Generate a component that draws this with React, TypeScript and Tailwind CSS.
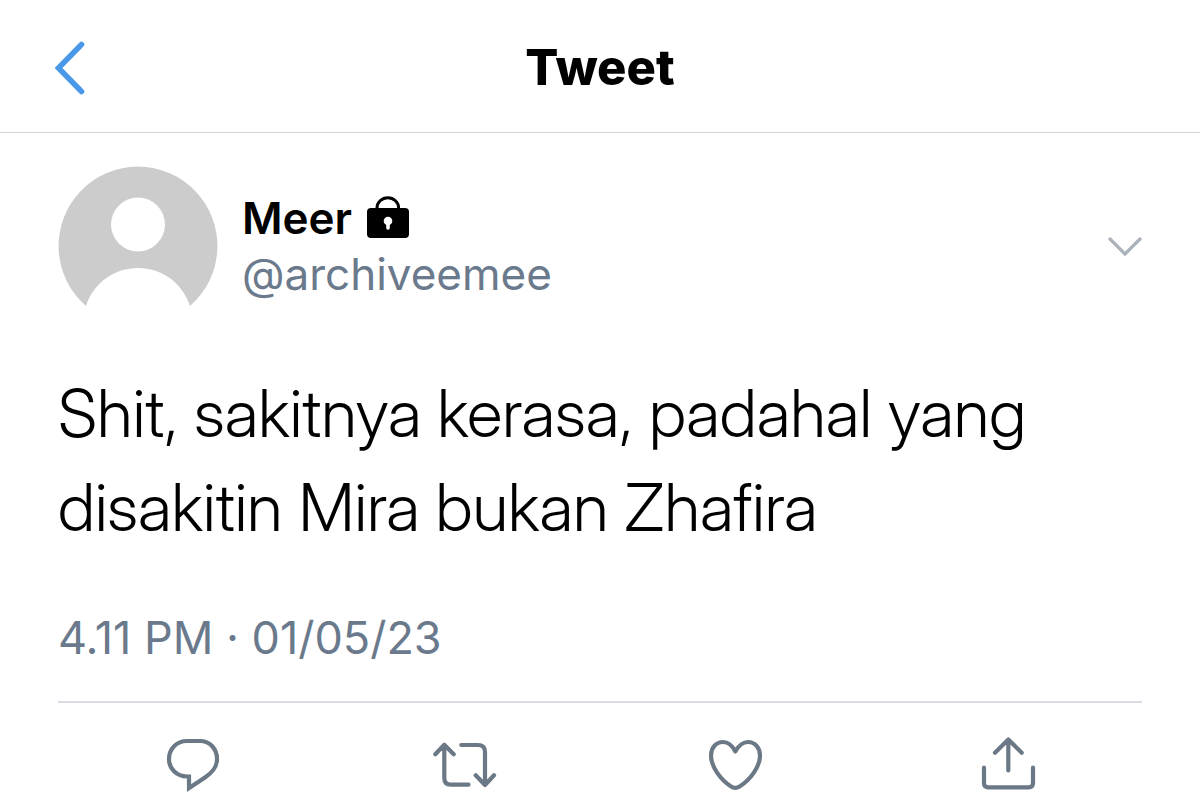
import type { ReactNode } from "react";

const actions: { label: string; icon: ReactNode }[] = [
  {
    label: "Reply",
    icon: (
      <path
        strokeLinejoin="miter"
        d="M25 6H38C48 6 55 14 55 24C55 32 51 37 43 42.500L27 53V41.500H25C14.500 41.500 7 33.500 7 24C7 14 14.500 6 25 6Z"
      />
    ),
  },
  {
    label: "Retweet",
    icon: <path d="M2.300 19.300 11.300 9.800 20.700 19.300M11.300 10V43Q11.300 49.700 18 49.700H35.500M28.300 10H45Q52 10 52 17V50M42.700 40.300 52 50 61 40.300" />,
  },
  {
    label: "Like",
    icon: (
      <path d="M31.300 16.500C28 10 24 7 19 7C12 7 7 13 7 20.500C7 32 17 45 27 51.500Q31.300 54.200 35.600 51.500C46 45 56 32 56 20.500C56 13 51 7 44 7C39 7 35 10 31.300 16.500Z" />
    ),
  },
  {
    label: "Share",
    icon: <path d="M20 17.700 33.300 4.500 46.700 17.700M33.300 5V35.500M9 32.500V48Q9 52.300 13.300 52.300H53.700Q58 52.300 58 48V32.500" />,
  },
];

export default function App() {
  return (
    <main className="min-h-screen overflow-hidden bg-white font-['Inter',sans-serif] text-black">
      <header className="grid h-[133px] grid-cols-[1fr_auto_1fr] items-center border-b border-[#d2d3da] px-[54px] pt-1">
        <button type="button" aria-label="Back" className="justify-self-start">
          <svg
            className="h-[54px] w-8"
            viewBox="0 0 32 54"
            fill="none"
            stroke="#4a99e9"
            strokeWidth="5.500"
            strokeLinecap="round"
          >
            <path d="M27.500 3.500 4.500 27 27.500 50.500" />
          </svg>
        </button>
        <h1 className="text-[49px] leading-[60px] font-extrabold">Tweet</h1>
      </header>
      <article className="px-[58px] pt-[33px]">
        <div className="flex items-center">
          <svg className="size-40 shrink-0" viewBox="0 0 160 160" role="img" aria-label="Profile picture">
            <path fill="#ccc" d="M28 140A79.400 79.400 0 1 1 132 140C124 116 103 102 80 102S36 116 28 140Z" />
            <circle cx="80" cy="58.500" r="27" fill="#fff" />
          </svg>
          <div className="ml-6 flex-1">
            <div className="flex items-center gap-[15px]">
              <h2 className="text-[44px] leading-[56px] font-semibold">Meer</h2>
              <svg className="h-11 w-[43px]" viewBox="0 0 43 44" role="img" aria-label="Protected account">
                <path d="M10 14V12A10.800 10.300 0 0 1 31.600 12V14" fill="none" stroke="#000" strokeWidth="3" />
                <rect y="12" width="42" height="30" rx="4" />
                <circle cx="21" cy="25" r="4.300" fill="#fff" />
                <path d="M19.200 27h3.600v5a1.800 1.800 0 0 1-3.600 0z" fill="#fff" />
              </svg>
            </div>
            <p className="text-[44px] leading-[56px] text-[#6a7a8c]">@archiveemee</p>
          </div>
          <button type="button" aria-label="More options">
            <svg
              className="h-5 w-[34px]"
              viewBox="0 0 34 20"
              fill="none"
              stroke="#abb2ba"
              strokeWidth="3.200"
              strokeLinecap="round"
            >
              <path d="M2 3 17 18 32 3" />
            </svg>
          </button>
        </div>
        <p className="mt-10 font-['Inter_Display','Inter',sans-serif] text-[66px] leading-[94px] font-light">
          Shit, sakitnya kerasa, padahal yang disakitin Mira bukan Zhafira
        </p>
        <p className="mt-14 text-[45px] leading-[56px] text-[#6a7a8c]">4.11 PM · 01/05/23</p>
        <div className="mt-[35px] grid grid-cols-4 border-t-2 border-[#d9dce3] pt-8">
          {actions.map(({ label, icon }) => (
            <button key={label} type="button" aria-label={label} className="justify-self-center">
              <svg
                className="h-[60px] w-[63px] overflow-visible"
                viewBox="0 0 63 60"
                fill="none"
                stroke="#6b7986"
                strokeWidth="4.200"
                strokeLinecap="round"
                strokeLinejoin="round"
              >
                {icon}
              </svg>
            </button>
          ))}
        </div>
      </article>
    </main>
  );
}
